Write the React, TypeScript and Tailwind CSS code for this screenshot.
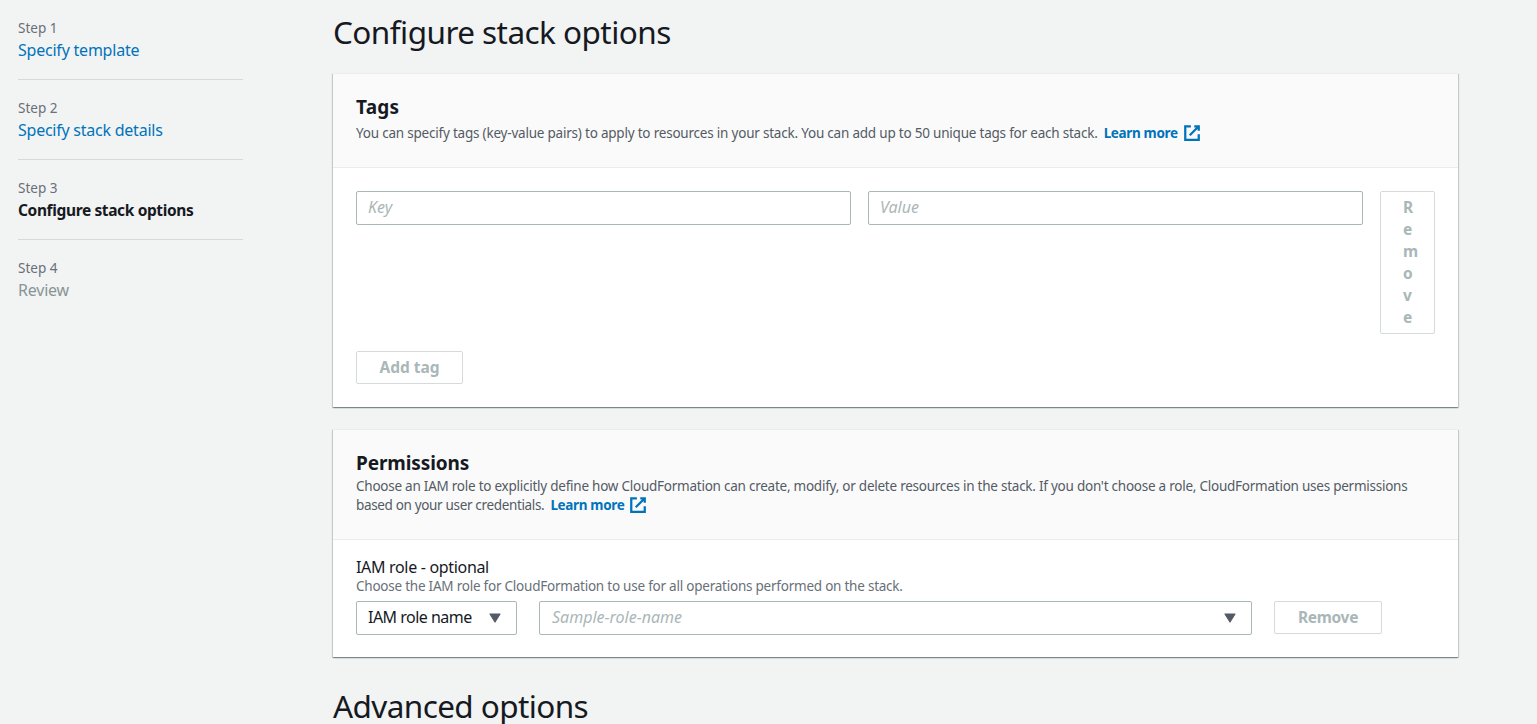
import type { ReactNode } from 'react';

const steps = [
  { n: 1, title: 'Specify template', style: 'text-base leading-[22px] tracking-[-0.22px] text-[#0073bb]' },
  { n: 2, title: 'Specify stack details', style: 'text-base leading-[22px] tracking-[-0.24px] text-[#0073bb]' },
  { n: 3, title: 'Configure stack options', style: 'text-[15.5px] tracking-[-0.37px] font-bold text-[#16191f]' },
  { n: 4, title: 'Review', style: 'text-base leading-[22px] tracking-[-0.2px] text-[#879596]' },
];

function ExternalIcon() {
  return (
    <svg className="ml-[5px] inline-block size-[18px] shrink-0 align-[-4px]" viewBox="0 0 16 16" fill="none" stroke="#0073bb" strokeWidth="2">
      <path d="M10 2h4v4M6 10l8-8M14 9.048V14H2V2h5" />
    </svg>
  );
}

function Caret() {
  return (
    <svg className="h-[10px] w-3 shrink-0" viewBox="0 0 12 10">
      <path d="M1 1h10L6 9z" fill="#545b64" stroke="#545b64" strokeWidth="1.2" strokeLinejoin="round" />
    </svg>
  );
}

function LearnMore() {
  return (
    <a className="ml-[6px] whitespace-nowrap font-bold text-[#0073bb]">
      <span className="tracking-[-0.35px]">Learn more</span>
      <ExternalIcon />
    </a>
  );
}

function Card({ header, children, className }: { header: ReactNode; children: ReactNode; className: string }) {
  return (
    <section
      className={`flex flex-col border-t border-[#eaeded] bg-white shadow-[0_1px_1px_0_rgba(0,28,36,0.3),1px_1px_1px_0_rgba(0,28,36,0.15),-1px_1px_1px_0_rgba(0,28,36,0.15)] ${className}`}
    >
      {header}
      {children}
    </section>
  );
}

export default function App() {
  return (
    <div className="flex h-[724px] w-full overflow-hidden bg-[#f2f3f3] font-['Noto_Sans',sans-serif] text-[15.5px] leading-[22px] text-[#16191f]">
      <nav className="ml-[18px] mt-[17px] w-[225px] shrink-0">
        {steps.map((s) => (
          <div key={s.n} className="mb-[17px] h-[63px] border-b border-[#d5dbdb] last:border-0">
            <div className="text-[13.5px] text-[#687078]">Step {s.n}</div>
            <div className={s.style}>{s.title}</div>
          </div>
        ))}
      </nav>

      <main className="ml-[90px] w-[1125px] shrink-0">
        <h1 className="mt-[11px] h-[62px] text-[31.5px] leading-[42px] tracking-[-0.55px]">Configure stack options</h1>

        <Card
          className="h-[334px]"
          header={
            <header className="h-[94px] shrink-0 border-b border-[#eaeded] bg-[#fafafa] px-[23px] pt-[21px]">
              <h2 className="text-[19px] font-bold leading-6 tracking-[0.2px]">Tags</h2>
              <p className="mt-[5px] whitespace-nowrap text-[13.5px] leading-[19px] text-[#545b64]">
                <span className="tracking-[-0.21px]">You can specify tags (key-value pairs) to apply to resources in your stack. You can add up to 50 unique tags for each stack.</span>
                <LearnMore />
              </p>
            </header>
          }
        >
          <div className="px-[23px] pt-[23px]">
            <div className="flex items-start gap-[17px]">
              <div className="h-[34px] w-[495px] rounded-xs border border-[#aab7b8] px-[11px] pt-1 text-base leading-[22px] italic text-[#aab7b8]">Key</div>
              <div className="h-[34px] w-[495px] rounded-xs border border-[#aab7b8] px-[11px] pt-1 text-base leading-[22px] italic text-[#aab7b8]">Value</div>
              <button className="h-[143px] w-[55px] rounded-xs border border-[#d5dbdb] px-[22px] pb-[5px] pt-1 text-left font-bold text-[#aab7b8]">
                <span className="block w-2 break-all">Remove</span>
              </button>
            </div>
            <button className="mt-[17px] flex h-[33px] w-[107px] items-center justify-center rounded-xs border border-[#d5dbdb] pb-[2px] font-bold text-[#aab7b8]">
              Add tag
            </button>
          </div>
        </Card>

        <Card
          className="mt-[22px] h-[228px]"
          header={
            <header className="h-[110px] shrink-0 border-b border-[#eaeded] bg-[#fafafa] px-[23px] pt-[21px]">
              <h2 className="text-[19px] font-bold leading-6 tracking-[-0.1px]">Permissions</h2>
              <div className="mt-[2px] whitespace-nowrap text-[13.5px] leading-[19px] text-[#545b64]">
                <p className="h-[19px]">
                  <span className="tracking-[-0.243px]">Choose an IAM role to explicitly define how CloudFormation can create, modify, or delete resources in the stack. If you don't choose a role, CloudFormation uses permissions</span>
                </p>
                <p className="h-[19px]">
                  <span className="tracking-[-0.34px]">based on your user credentials.</span>
                  <LearnMore />
                </p>
              </div>
            </header>
          }
        >
          <div className="px-[23px] pt-[17px]">
            <div className="text-base leading-5 tracking-[-0.32px]">IAM role - optional</div>
            <div className="text-[13.5px] leading-[19px] tracking-[-0.23px] text-[#687078]">Choose the IAM role for CloudFormation to use for all operations performed on the stack.</div>
            <div className="mt-[5px] flex items-start gap-[22px]">
              <div className="flex h-[34px] w-[161px] items-center justify-between rounded-xs border border-[#aab7b8] pl-[11px] pr-[15px]">
                <span className="pb-[2px] text-base leading-[22px] tracking-[-0.52px]">IAM role name</span>
                <Caret />
              </div>
              <div className="flex h-[34px] w-[713px] items-center justify-between rounded-xs border border-[#aab7b8] pl-3 pr-[15px]">
                <span className="pb-[2px] text-base leading-[22px] italic text-[#aab7b8]">Sample-role-name</span>
                <Caret />
              </div>
              <button className="flex h-[33px] w-[108px] items-center justify-center rounded-xs border border-[#d5dbdb] pb-[2px] font-bold tracking-[-0.3px] text-[#aab7b8]">
                Remove
              </button>
            </div>
          </div>
        </Card>

        <h1 className="mt-[28px] text-[31.5px] leading-[42px] tracking-[-0.6px]">Advanced options</h1>
      </main>
    </div>
  );
}
